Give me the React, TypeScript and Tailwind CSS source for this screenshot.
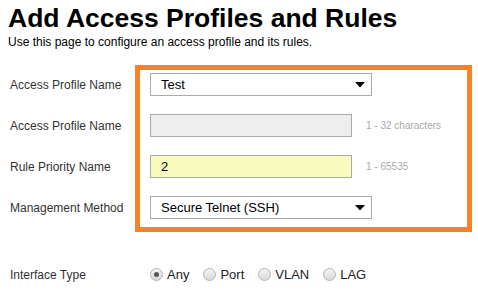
import React from "react";

function Caret() {
  return (
    <svg width="10" height="6" viewBox="0 0 10 6" className="shrink-0">
      <path d="M0 0 L10 0 L5 5.5 Z" fill="#000" />
    </svg>
  );
}

function Radio({ checked, label }: { checked?: boolean; label: string }) {
  return (
    <div className="flex items-center gap-[4px]">
      <span className="flex h-[13px] w-[13px] items-center justify-center rounded-full border border-[#b4b4b4] bg-gradient-to-b from-[#f4f4f4] to-[#d9d9d9]">
        {checked && <span className="h-[5px] w-[5px] rounded-full bg-[#555]" />}
      </span>
      <span className="text-[13px] text-[#222]">{label}</span>
    </div>
  );
}

export default function App() {
  return (
    <div
      className="h-[299px] w-[478px] overflow-hidden bg-white pl-[8px] text-[#222]"
      style={{ fontFamily: '"Liberation Sans", Arial, sans-serif' }}
    >
      <h1 className="pt-[4px] text-[26.5px] font-bold leading-[28px] text-black">
        Add Access Profiles and Rules
      </h1>
      <p className="mt-[3px] text-[12px] leading-[14px] text-black">
        Use this page to configure an access profile and its rules.
      </p>

      <div className="mt-[16px] flex">
        <div className="flex w-[127px] flex-col gap-[18px] pl-[2px] pt-[8px] text-[12px] text-[#333]">
          <div className="flex h-[23px] items-center">Access Profile Name</div>
          <div className="flex h-[23px] items-center">Access Profile Name</div>
          <div className="flex h-[23px] items-center">Rule Priority Name</div>
          <div className="flex h-[23px] items-center">Management Method</div>
        </div>
        <div className="flex h-[167px] w-[337px] flex-col gap-[18px] border-[5px] border-[#fb8128] pl-[10px] pt-[3px]">
          <div className="flex h-[23px] w-[222px] items-center justify-between border border-[#aaa] bg-white pl-[10px] pr-[6px] text-[13px] text-black">
            <span>Test</span>
            <Caret />
          </div>
          <div className="flex items-center">
            <div className="h-[23px] w-[202px] border border-[#aaa] bg-[#eeeeee]" />
            <span className="ml-[14px] text-[10px] text-[#aaa]">1 - 32 characters</span>
          </div>
          <div className="flex items-center">
            <div className="flex h-[23px] w-[202px] items-center border border-[#aaa] bg-[#f9fcbe] pl-[10px] text-[13px] text-black">
              2
            </div>
            <span className="ml-[14px] text-[10px] text-[#aaa]">1 - 65535</span>
          </div>
          <div className="flex h-[23px] w-[222px] items-center justify-between border border-[#aaa] bg-white pl-[10px] pr-[6px] text-[13px] text-black">
            <span>Secure Telnet (SSH)</span>
            <Caret />
          </div>
        </div>
      </div>

      <div className="mt-[33px] flex items-center">
        <div className="w-[142px] pl-[2px] text-[12px] text-[#333]">Interface Type</div>
        <div className="flex items-center gap-[14px]">
          <Radio checked label="Any" />
          <Radio label="Port" />
          <Radio label="VLAN" />
          <Radio label="LAG" />
        </div>
      </div>
    </div>
  );
}
